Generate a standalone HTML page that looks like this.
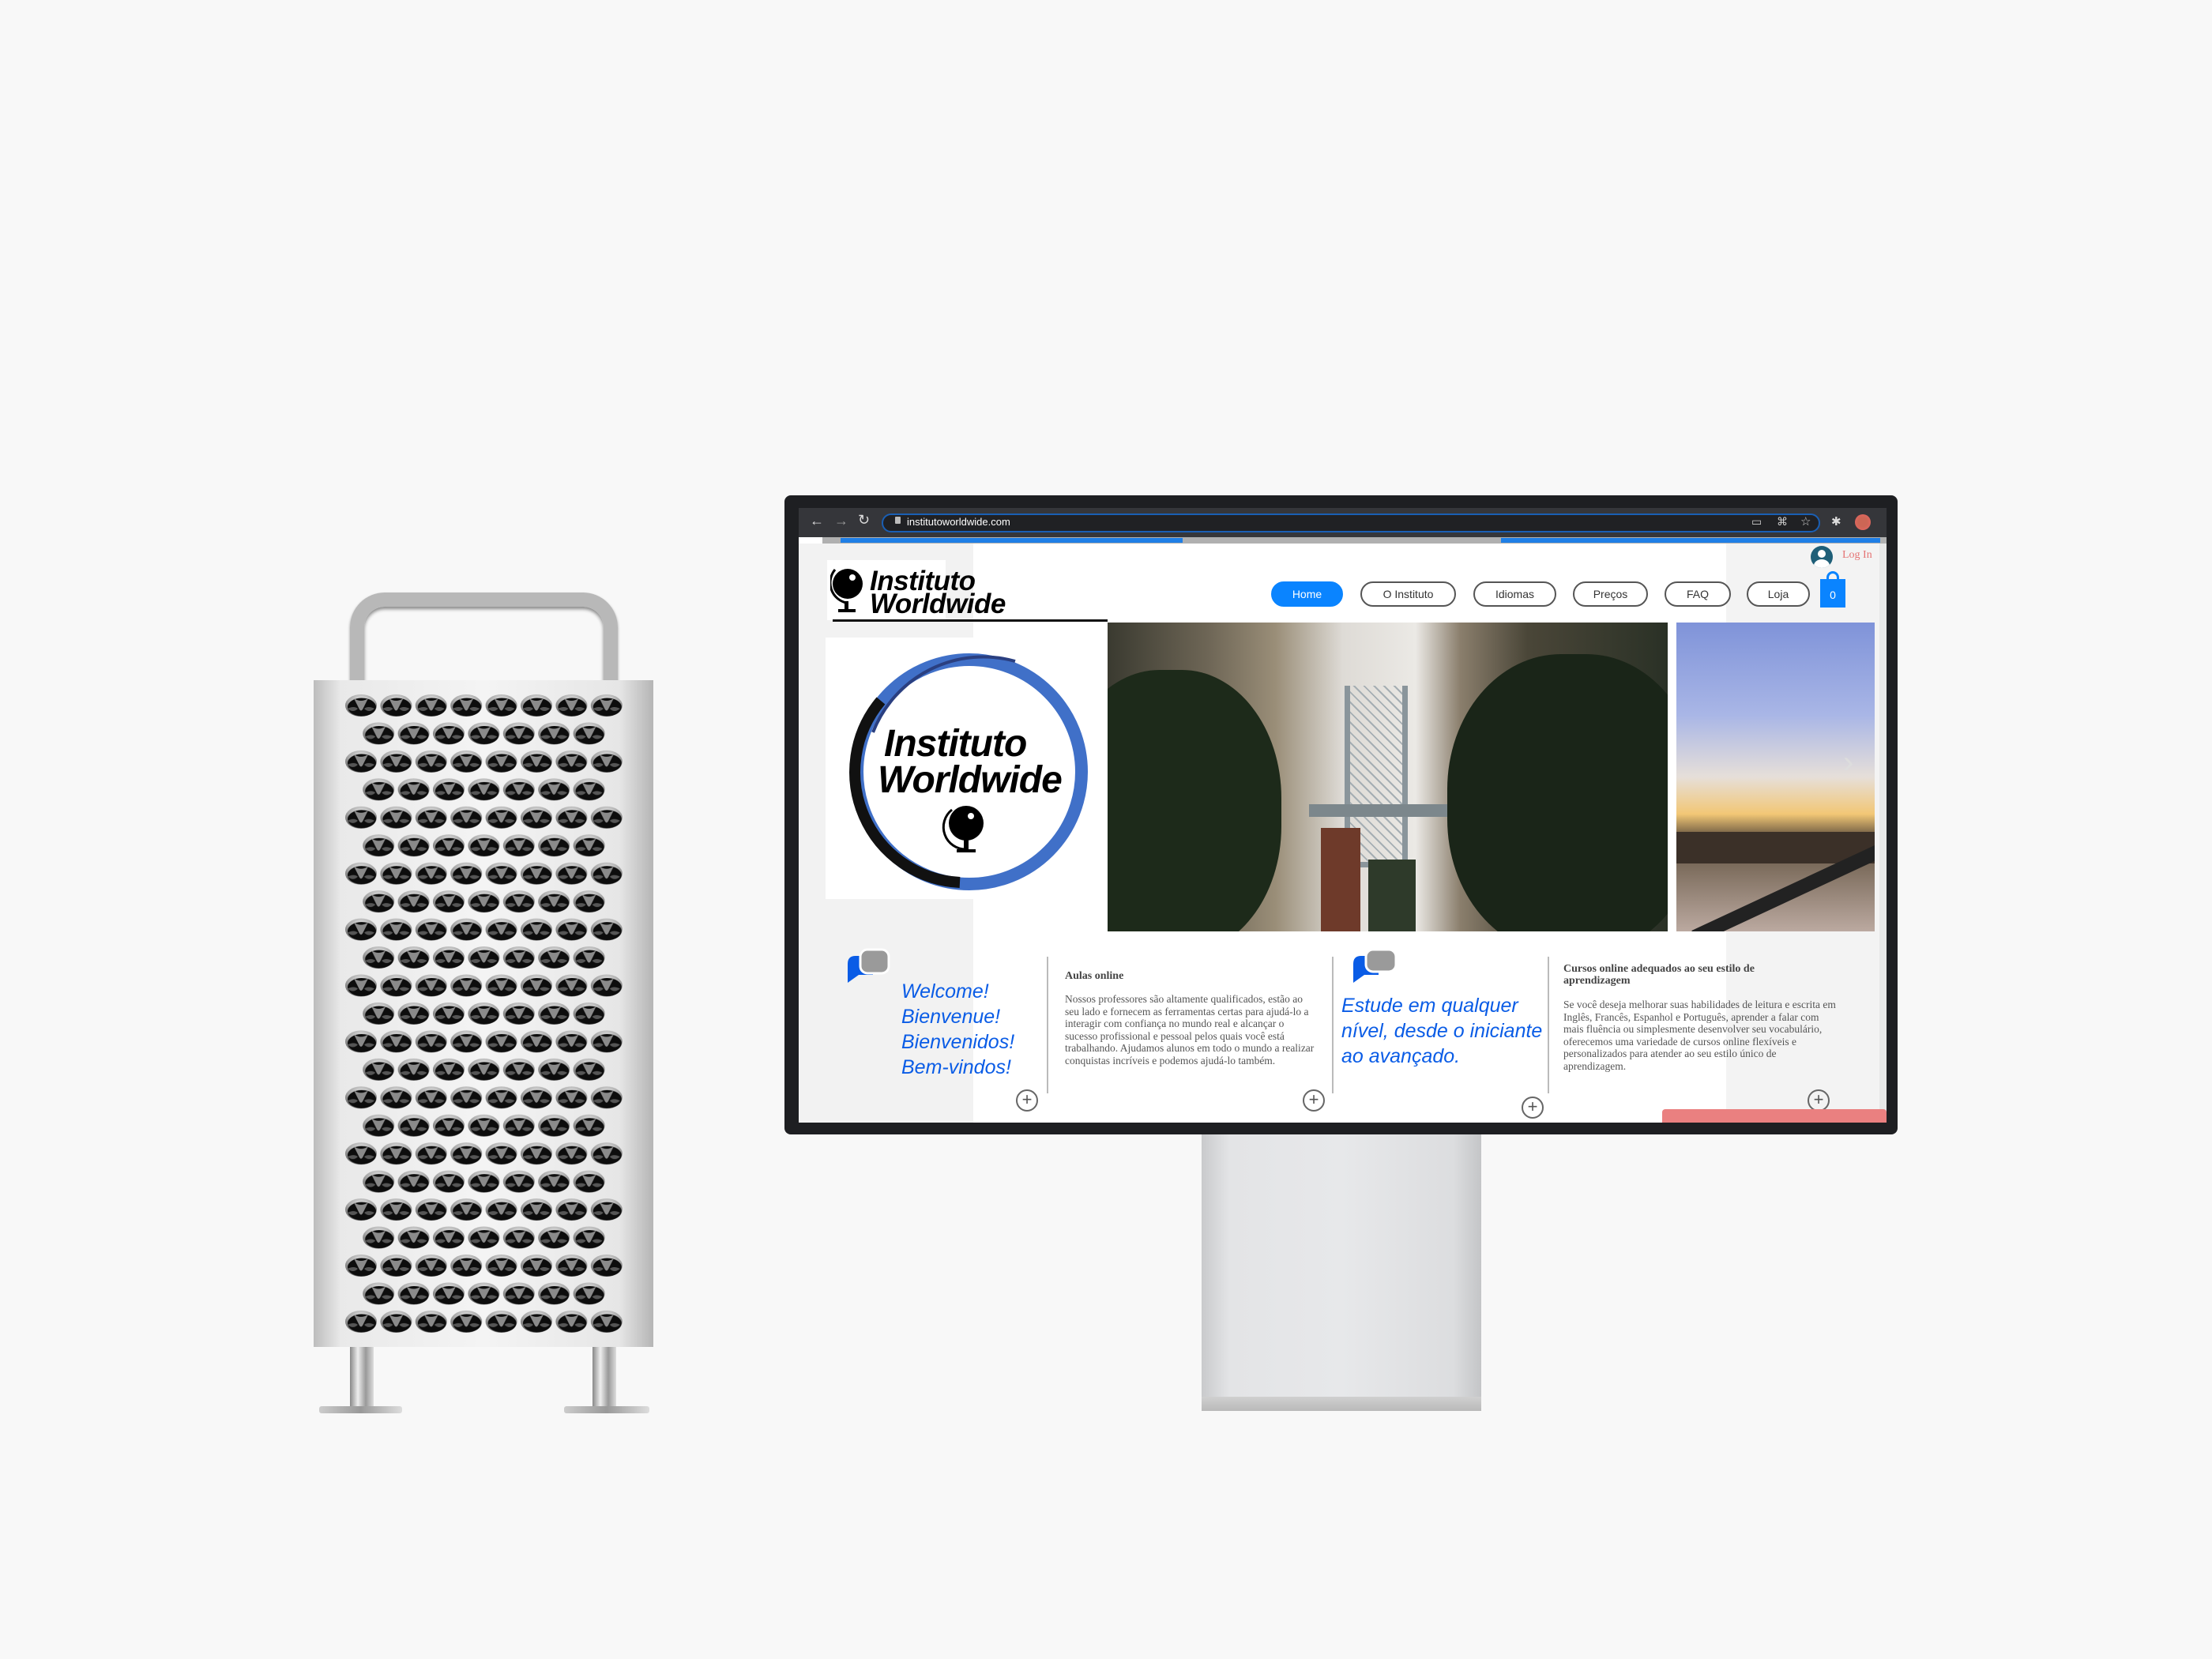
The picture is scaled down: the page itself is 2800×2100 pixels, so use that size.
<!DOCTYPE html>
<html><head><meta charset="utf-8">
<style>
*{margin:0;padding:0;box-sizing:border-box}
body{width:2800px;height:2100px;background:#f8f8f8;position:relative;overflow:hidden;font-family:"Liberation Sans",sans-serif}
.a{position:absolute}
.nav{position:absolute;top:93px;height:32px;border:2px solid #555;border-radius:16px;font-size:14px;color:#333;display:flex;align-items:center;justify-content:center;background:#fff}
.serif{font-family:"Liberation Serif",serif}
.plus{position:absolute;width:28px;height:28px;border:2px solid #666;border-radius:50%;color:#555;font-size:22px;line-height:22px;text-align:center}
.vl{position:absolute;width:2px;background:#bbb;height:173px}
.blue{color:#0a5ce6;font-style:italic;font-size:25px;position:absolute}
</style></head><body>

<!-- Mac Pro -->
<div class="a" style="left:443px;top:750px;width:339px;height:140px;border:18px solid #b8b8b8;border-bottom:none;border-radius:44px 44px 0 0;box-shadow:inset 0 3px 4px #888, 0 2px 3px #999"></div>
<div class="a" style="left:443px;top:1700px;width:30px;height:84px;background:linear-gradient(90deg,#888,#eee,#999,#ddd)"></div>
<div class="a" style="left:750px;top:1700px;width:30px;height:84px;background:linear-gradient(90deg,#888,#eee,#999,#ddd)"></div>
<div class="a" style="left:404px;top:1780px;width:105px;height:9px;background:linear-gradient(90deg,#ccc,#999,#ddd);border-radius:3px"></div>
<div class="a" style="left:714px;top:1780px;width:108px;height:9px;background:linear-gradient(90deg,#ccc,#999,#ddd);border-radius:3px"></div>
<svg class="a" style="left:397px;top:861px" width="430" height="844">
<defs>
<linearGradient id="bg" x1="0" x2="1"><stop offset="0" stop-color="#bdbdbd"/><stop offset=".08" stop-color="#e9e9e9"/><stop offset=".5" stop-color="#f4f4f4"/><stop offset=".9" stop-color="#e6e6e6"/><stop offset="1" stop-color="#b5b5b5"/></linearGradient>
<radialGradient id="rim" cx=".5" cy=".3" r=".65"><stop offset="0" stop-color="#f0f0f0"/><stop offset=".6" stop-color="#a8a8a8"/><stop offset="1" stop-color="#666"/></radialGradient>
<g id="h"><ellipse rx="20" ry="14" fill="url(#rim)"/><ellipse cx="1" cy="2" rx="18" ry="11.5" fill="#0d0d0d"/><path d="M-9,-9 Q0,-3 9,-9 L3,3 Q0,10 -3,3 Z" fill="#8a8a8a"/><path d="M-17,4 Q-9,0 -4,4 Q-10,10 -17,4Z M17,4 Q9,0 4,4 Q10,10 17,4Z" fill="#555"/></g>
<pattern id="pa" x="60" y="32" width="44.4" height="70.9" patternUnits="userSpaceOnUse">
<use href="#h" x="0" y="0"/><use href="#h" x="44.4" y="0"/><use href="#h" x="0" y="70.9"/><use href="#h" x="44.4" y="70.9"/>
</pattern>
<pattern id="pb" x="82.2" y="67.45" width="44.4" height="70.9" patternUnits="userSpaceOnUse">
<use href="#h" x="0" y="0"/><use href="#h" x="44.4" y="0"/><use href="#h" x="0" y="70.9"/><use href="#h" x="44.4" y="70.9"/>
</pattern>
</defs>
<rect width="430" height="844" fill="url(#bg)"/>
<rect x="38" y="16" width="356" height="812" fill="url(#pa)"/>
<rect x="61" y="50" width="310" height="760" fill="url(#pb)"/>
</svg>

<!-- Monitor stand -->
<div class="a" style="left:1521px;top:1436px;width:354px;height:350px;background:linear-gradient(90deg,#c9cacc,#e3e4e6 10%,#e7e8ea 50%,#dcdddf 90%,#c4c5c7)"></div>
<div class="a" style="left:1521px;top:1768px;width:354px;height:18px;background:linear-gradient(#d0d0d0,#b9b9b9)"></div>
<!-- bezel -->
<div class="a" style="left:993px;top:627px;width:1409px;height:809px;background:#1e1f22;border-radius:8px"></div>
<div class="a" style="left:1011px;top:643px;width:1377px;height:778px;background:#fff;overflow:hidden">
 <div class="a" style="left:0;top:0;width:1377px;height:37px;background:#35363a"></div>
 <div class="a" style="left:14px;top:6px;color:#ddd;font-size:18px">←</div>
 <div class="a" style="left:45px;top:6px;color:#999;font-size:18px">→</div>
 <div class="a" style="left:75px;top:5px;color:#ddd;font-size:18px">↻</div>
 <div class="a" style="left:105px;top:7px;width:1188px;height:24px;background:#202124;border:2px solid #1a5fb4;border-radius:12px"></div>
 <div class="a" style="left:122px;top:11px;width:7px;height:9px;background:#bbb;border-radius:1px"></div>
 <div class="a" style="left:137px;top:10px;color:#fff;font-size:13px">institutoworldwide.com</div>
 <div class="a" style="left:1206px;top:9px;color:#ccc;font-size:14px">▭</div>
 <div class="a" style="left:1238px;top:9px;color:#ccc;font-size:14px">⌘</div>
 <div class="a" style="left:1268px;top:8px;color:#ccc;font-size:15px">☆</div>
 <div class="a" style="left:1307px;top:8px;color:#ddd;font-size:15px">✱</div>
 <div class="a" style="left:1337px;top:8px;width:20px;height:20px;border-radius:50%;background:radial-gradient(#c65 40%,#e66)"></div>
 <div class="a" style="left:30px;top:37px;width:1347px;height:8px;background:#b0b0b0"></div>
 <div class="a" style="left:53px;top:38px;width:433px;height:6px;background:#1f7fe6"></div>
 <div class="a" style="left:889px;top:38px;width:480px;height:6px;background:#1f7fe6"></div>
 <div class="a" style="left:0;top:45px;width:221px;height:733px;background:#f2f2f2"></div>
 <div class="a" style="left:1174px;top:45px;width:203px;height:733px;background:#f3f3f3"></div>
 <div class="a" style="left:1368px;top:45px;width:9px;height:733px;background:#e8e8e8"></div>
 <div class="a" style="left:36px;top:66px;width:150px;height:76px;background:#fff"></div>
 <svg class="a" style="left:40px;top:68px" width="50" height="70"><circle cx="22" cy="28" r="19" fill="#000"/><circle cx="28" cy="20" r="4" fill="#fff"/><path d="M6,10 A26,26 0 0 0 20,52" stroke="#000" stroke-width="3" fill="none"/><rect x="18" y="50" width="5" height="10"/><rect x="10" y="60" width="22" height="4"/></svg>
 <div class="a" style="left:90px;top:78px;font-size:35px;font-weight:bold;font-style:italic;line-height:29px;color:#000;letter-spacing:-0.5px">Instituto<br>Worldwide</div>
 <div class="a" style="left:43px;top:141px;width:348px;height:3px;background:#111"></div>
 <div class="nav" style="left:598px;width:91px;background:#0a84ff;border-color:#0a84ff;color:#fff">Home</div>
 <div class="nav" style="left:711px;width:121px">O Instituto</div>
 <div class="nav" style="left:854px;width:105px">Idiomas</div>
 <div class="nav" style="left:980px;width:95px">Preços</div>
 <div class="nav" style="left:1096px;width:84px">FAQ</div>
 <div class="nav" style="left:1200px;width:80px">Loja</div>
 <div class="a" style="left:1293px;top:90px;width:32px;height:36px;background:#0a84ff;color:#fff;font-size:14px;text-align:center;line-height:40px">0</div>
 <div class="a" style="left:1301px;top:80px;width:16px;height:14px;border:3px solid #0a84ff;border-bottom:none;border-radius:8px 8px 0 0"></div>
 <div class="a" style="left:1281px;top:48px;width:28px;height:28px;border-radius:50%;background:#1f5f78;overflow:hidden"><div class="a" style="left:9px;top:5px;width:10px;height:10px;border-radius:50%;background:#fff"></div><div class="a" style="left:4px;top:17px;width:20px;height:16px;border-radius:50%;background:#fff"></div></div>
 <div class="a serif" style="left:1321px;top:52px;color:#e57373;font-size:14px">Log In</div>
 <div class="a" style="left:34px;top:164px;width:357px;height:331px;background:#fff"></div>
 <svg class="a" style="left:34px;top:164px" width="357" height="331">
  <circle cx="182" cy="170" r="142" fill="none" stroke="#4070c8" stroke-width="16"/>
  <path d="M70,80 A140,140 0 0 0 170,310" stroke="#111" stroke-width="14" fill="none"/>
  <path d="M60,120 A150,150 0 0 1 240,30" stroke="#2a3f80" stroke-width="4" fill="none"/>
  <text x="74" y="150" font-family="Liberation Sans" font-weight="bold" font-style="italic" font-size="48" fill="#000" letter-spacing="-1">Instituto</text>
  <text x="66" y="196" font-family="Liberation Sans" font-weight="bold" font-style="italic" font-size="48" fill="#000" letter-spacing="-1">Worldwide</text>
  <circle cx="178" cy="235" r="22" fill="#000"/><circle cx="184" cy="226" r="4" fill="#fff"/>
  <path d="M160,218 A28,28 0 0 0 178,268" stroke="#000" stroke-width="3" fill="none"/>
  <rect x="175" y="256" width="6" height="12"/><rect x="166" y="268" width="24" height="4"/>
 </svg>
 <div class="a" style="left:391px;top:145px;width:709px;height:391px;overflow:hidden;background:linear-gradient(90deg,#3a3a30 0%,#6e6656 18%,#9a8e78 30%,#dedbd6 42%,#ebe9e5 55%,#8a7e6c 63%,#4a4638 75%,#2a3126 100%)">
  <div class="a" style="left:-60px;top:60px;width:280px;height:360px;border-radius:45%;background:#1d2a1a"></div>
  <div class="a" style="left:430px;top:40px;width:320px;height:380px;border-radius:45%;background:#1a2518"></div>
  <div class="a" style="left:300px;top:80px;width:80px;height:230px;border:7px solid #8a959b;border-top:none;background:repeating-linear-gradient(45deg,transparent 0 7px,#a5aeb3 7px 9px)"></div>
  <div class="a" style="left:255px;top:230px;width:175px;height:16px;background:#7c878c"></div>
  <div class="a" style="left:270px;top:260px;width:50px;height:131px;background:#6e3a2a"></div>
  <div class="a" style="left:330px;top:300px;width:60px;height:91px;background:#2e3a2a"></div>
 </div>
 <div class="a" style="left:1111px;top:145px;width:251px;height:391px;overflow:hidden;background:linear-gradient(#7f93d9 0%,#a9b6e6 30%,#e6dfd9 50%,#f2c776 62%,#5a4a3a 70%,#7a6a5a 78%,#bba9a0 100%)">
  <div class="a" style="left:0;top:265px;width:251px;height:40px;background:#3b3028"></div>
  <div class="a" style="left:10px;top:330px;width:280px;height:18px;background:#222;transform:rotate(-25deg)"></div>
 </div>
 <div class="a" style="left:1322px;top:300px;color:#ddd;font-size:40px">›</div>
 <svg class="a" style="left:58px;top:557px" width="60" height="56"><path d="M4,20 Q4,10 14,10 h22 v24 h-18 l-14,10 z" fill="#0a5ce6"/><rect x="20" y="2" width="36" height="30" rx="9" fill="#9a9a9a" stroke="#fff" stroke-width="3"/></svg>
 <div class="blue" style="left:130px;top:596px;line-height:32px">Welcome!<br>Bienvenue!<br>Bienvenidos!<br>Bem-vindos!</div>
 <div class="vl" style="left:314px;top:568px"></div>
 <div class="a serif" style="left:337px;top:585px;font-weight:bold;font-size:14px;color:#444">Aulas online</div>
 <div class="a serif" style="left:337px;top:614px;width:318px;font-size:13.5px;line-height:15.5px;color:#555">Nossos professores são altamente qualificados, estão ao seu lado e fornecem as ferramentas certas para ajudá-lo a interagir com confiança no mundo real e alcançar o sucesso profissional e pessoal pelos quais você está trabalhando. Ajudamos alunos em todo o mundo a realizar conquistas incríveis e podemos ajudá-lo também.</div>
 <div class="plus" style="left:275px;top:736px">+</div>
 <div class="plus" style="left:638px;top:736px">+</div>
 <div class="plus" style="left:915px;top:745px">+</div>
 <div class="plus" style="left:1277px;top:736px">+</div>
 <div class="vl" style="left:675px;top:568px"></div>
 <svg class="a" style="left:698px;top:557px" width="62" height="54"><path d="M4,20 Q4,10 14,10 h22 v24 h-18 l-14,10 z" fill="#0a5ce6"/><rect x="20" y="2" width="38" height="28" rx="9" fill="#9a9a9a" stroke="#fff" stroke-width="3"/></svg>
 <div class="blue" style="left:687px;top:614px;line-height:32px">Estude em qualquer<br>nível, desde o iniciante<br>ao avançado.</div>
 <div class="vl" style="left:948px;top:568px"></div>
 <div class="a serif" style="left:968px;top:576px;width:300px;font-weight:bold;font-size:14px;line-height:15px;color:#444">Cursos online adequados ao seu estilo de aprendizagem</div>
 <div class="a serif" style="left:968px;top:621px;width:345px;font-size:13.5px;line-height:15.5px;color:#555">Se você deseja melhorar suas habilidades de leitura e escrita em Inglês, Francês, Espanhol e Português, aprender a falar com mais fluência ou simplesmente desenvolver seu vocabulário, oferecemos uma variedade de cursos online flexíveis e personalizados para atender ao seu estilo único de aprendizagem.</div>
 <div class="a" style="left:1093px;top:761px;width:284px;height:17px;background:#ea8080;border-radius:4px 4px 0 0"></div>
</div>
</body></html>
